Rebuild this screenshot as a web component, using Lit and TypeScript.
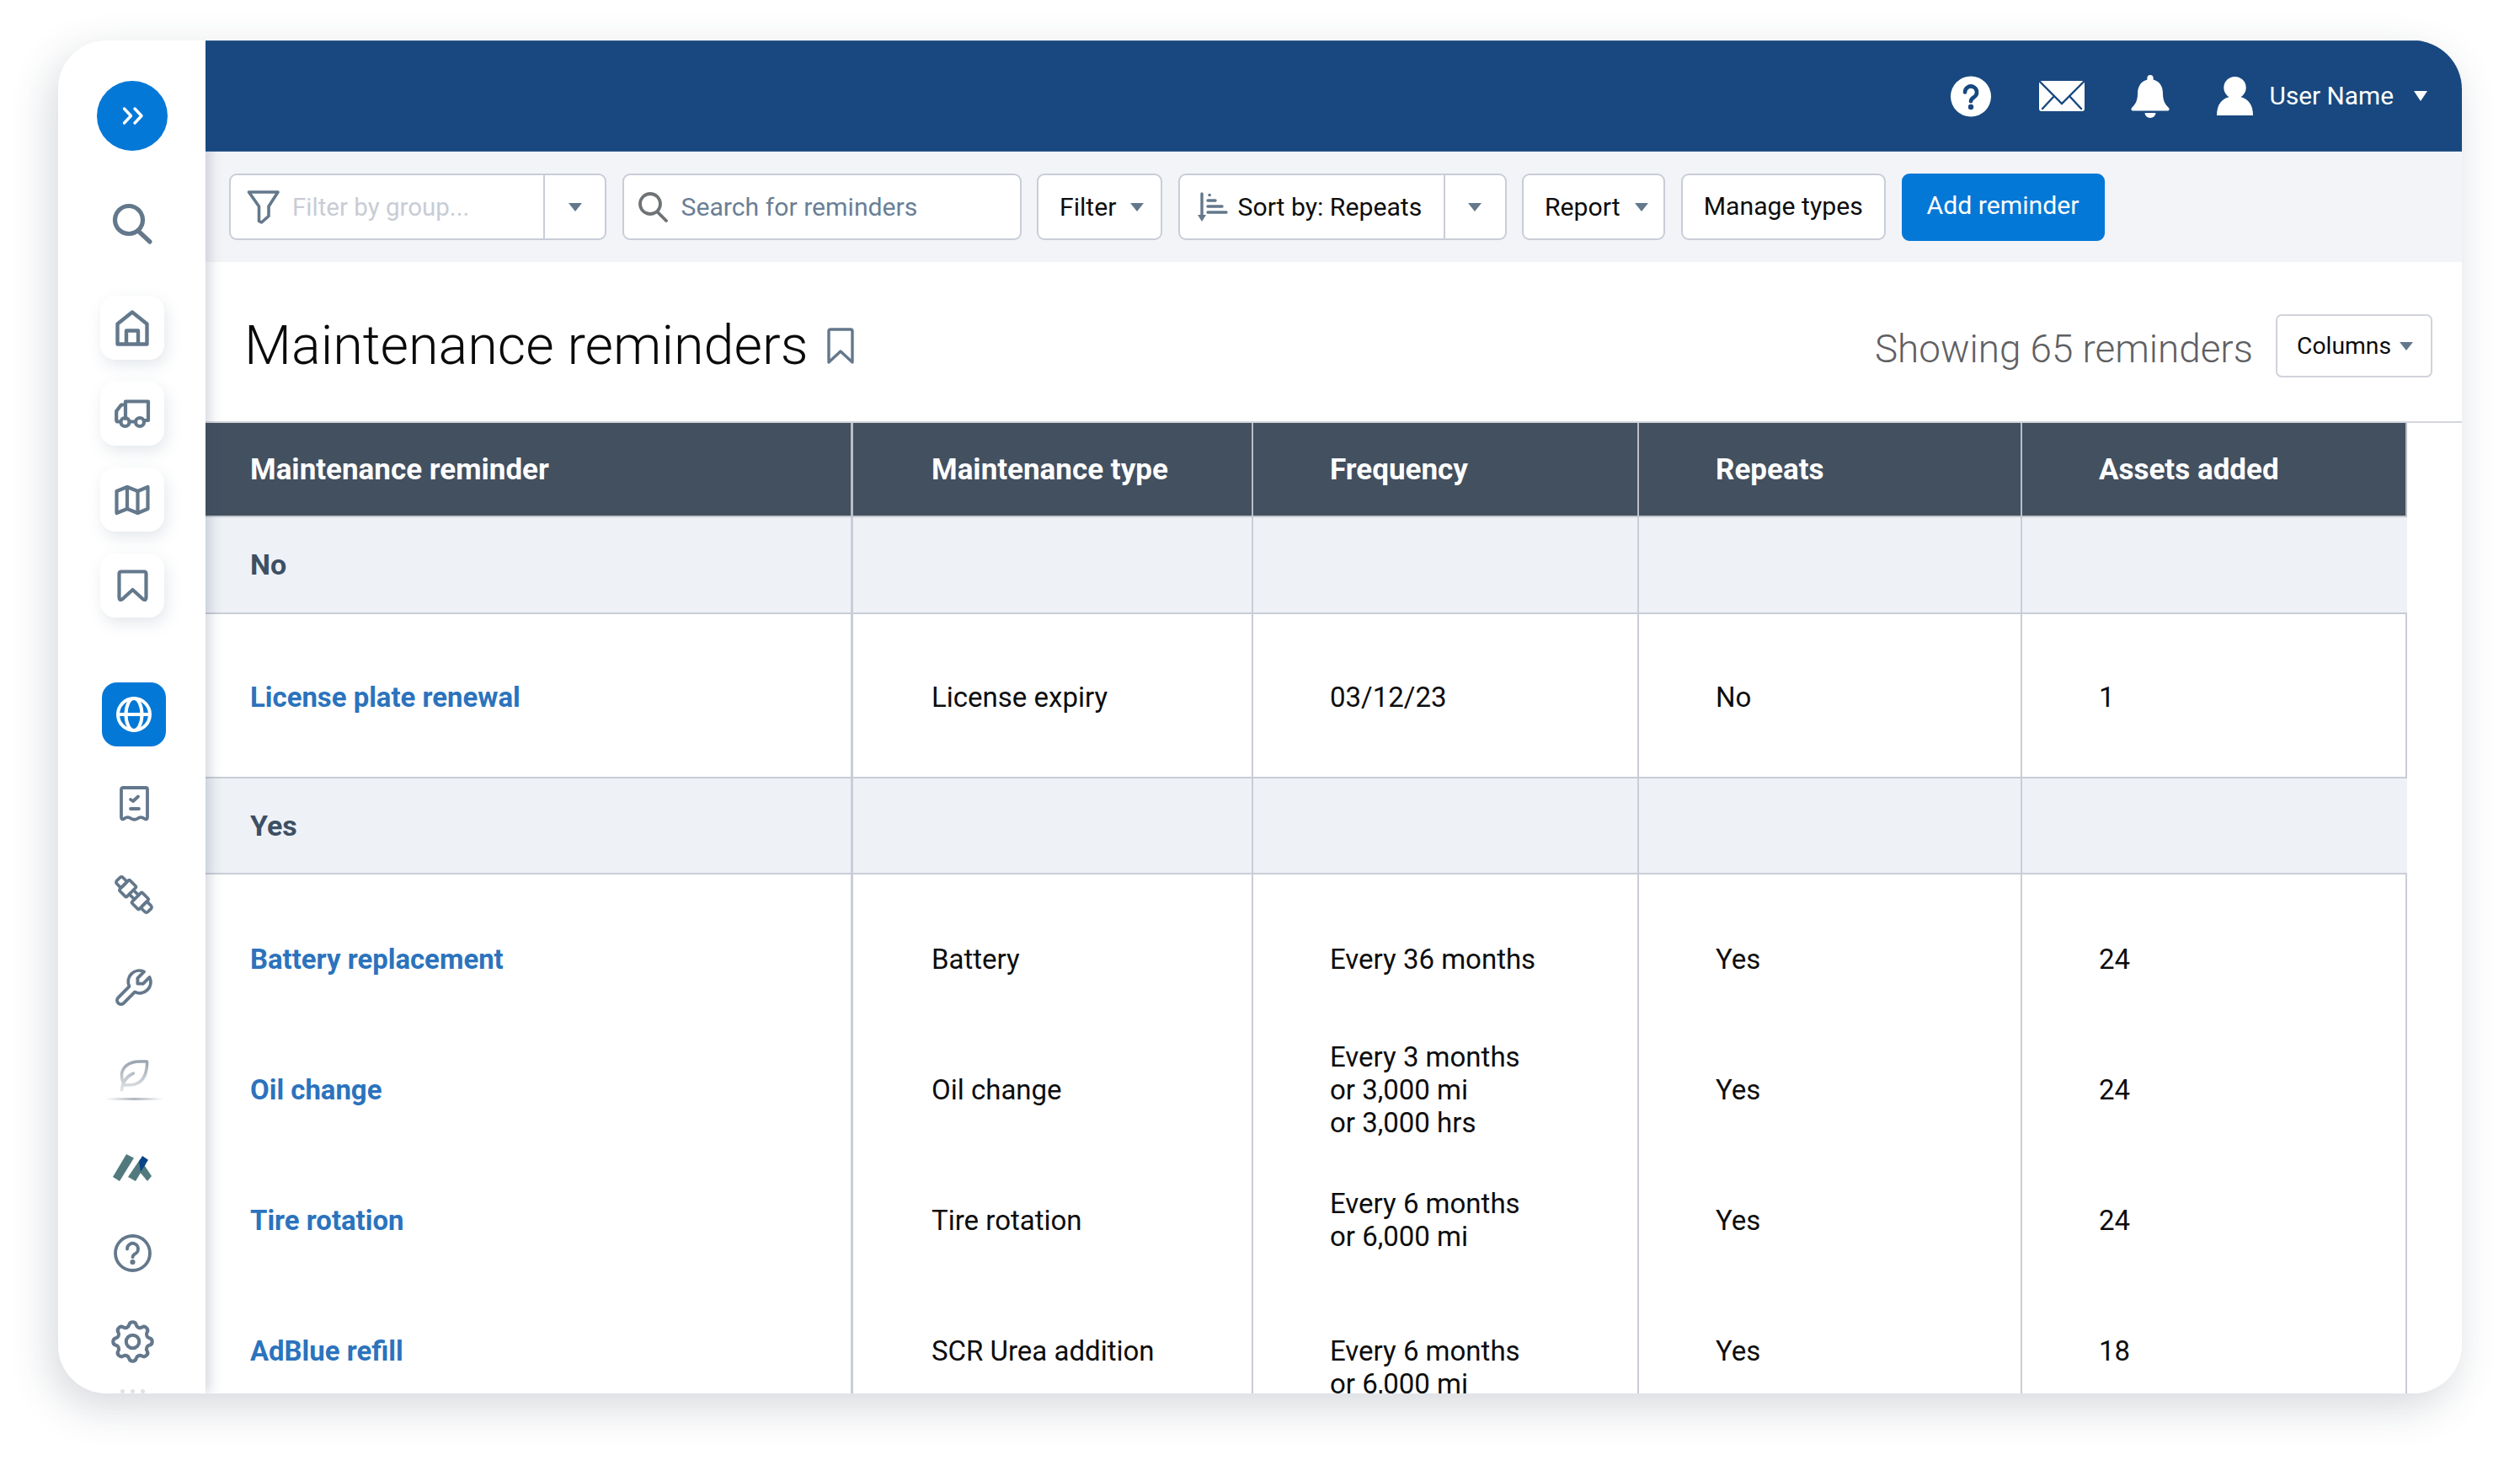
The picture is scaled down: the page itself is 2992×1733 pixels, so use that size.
import { LitElement, html, css } from "lit";
import { customElement } from "lit/decorators.js";

const caret = (cls = "") => html`<span class="caret ${cls}"></span>`;

interface Row {
  name: string;
  type: string;
  freq: string[];
  repeats: string;
  assets: string;
  cls: string;
}

const upperRows: Row[] = [
  { name: "Battery replacement", type: "Battery", freq: ["Every 36 months"], repeats: "Yes", assets: "24", cls: "first" },
  { name: "Oil change", type: "Oil change", freq: ["Every 3 months", "or 3,000 mi", "or 3,000 hrs"], repeats: "Yes", assets: "24", cls: "" },
  { name: "Tire rotation", type: "Tire rotation", freq: ["Every 6 months", "or 6,000 mi"], repeats: "Yes", assets: "24", cls: "" },
  { name: "AdBlue refill", type: "SCR Urea addition", freq: ["Every 6 months", "or 6,000 mi"], repeats: "Yes", assets: "18", cls: "last" },
];

@customElement("app-root")
export class AppRoot extends LitElement {
  static styles = css`
    :host { display: block; width: 2992px; height: 1733px; background: #fff; overflow: hidden; font-family: Roboto, "Liberation Sans", sans-serif; color: #0d0d0d; }
    .page { padding: 48px 69px 0; }
    .card { display: flex; width: 2854px; height: 1606px; border-radius: 58px; overflow: hidden; background: #fff; }
    .shadow { border-radius: 58px; box-shadow: -8px 16px 50px rgba(50, 65, 85, 0.2); width: 2854px; height: 1606px; }

    .side { position: relative; z-index: 1; flex: none; width: 175px; box-sizing: border-box; padding: 48px 0 0 1px; background: #fff; display: flex; flex-direction: column; align-items: center; box-shadow: 5px 0 14px rgba(60, 75, 95, 0.22); }
    .toggle { width: 84px; height: 84px; border-radius: 50%; background: #0478d7; display: flex; align-items: center; justify-content: center; }
    .toggle svg { margin-left: 2px; }
    .find { margin-top: 62px; }
    .tiles { margin-top: 62px; display: flex; flex-direction: column; gap: 26px; }
    .tile { width: 76px; height: 76px; border-radius: 18px; background: #fff; box-shadow: 3px 7px 18px rgba(90, 110, 135, 0.16); display: flex; align-items: center; justify-content: center; }
    .globe { margin: 77px 0 0 4px; background: #0478d7; box-shadow: none; }
    .nav { height: 48px; display: flex; align-items: center; justify-content: center; flex: none; }
    .shift { margin-left: 4px; }
    .g-receipt { margin-top: 44px; }
    .g-link { margin-top: 60px; }
    .g-wrench { margin-top: 62px; }
    .g-leaf { margin-top: 57px; height: 48px; position: relative; }
    .g-logo { margin-top: 61px; }
    .g-help { margin-top: 53px; }
    .g-gear { margin-top: 57px; }
    .rule { position: absolute; left: -17px; top: 50px; width: 69px; height: 3px; background: linear-gradient(90deg, rgba(170, 176, 184, 0), rgba(170, 176, 184, 0.9), rgba(170, 176, 184, 0)); }
    .crumbs { margin-top: 33px; display: flex; gap: 7px; }
    .crumbs i { width: 5px; height: 5px; border-radius: 50%; background: #dfe2e6; }

    .main { flex: 1; min-width: 0; display: flex; flex-direction: column; }
    .top { position: relative; z-index: 2; height: 132px; flex: none; box-sizing: border-box; background: #18487f; border-top: 1px solid #3a6090; border-bottom: 1px solid #3a6090; display: flex; align-items: center; justify-content: flex-end; padding: 0 41px 0 0; color: #fff; }
    .t-help { margin-right: 57px; }
    .t-mail { margin-right: 55px; }
    .t-bell { margin-right: 56px; }
    .t-user { margin-right: 19.5px; }
    .uname { font-size: 29.8px; margin-right: 24px; padding-bottom: 2px; }
    .caret { display: inline-block; width: 0; height: 0; border-left: 8px solid transparent; border-right: 8px solid transparent; border-top: 10px solid #64788c; flex: none; }
    .caret.white { border-top-color: #fff; border-top-width: 12px; }

    .bar { height: 131px; flex: none; box-sizing: border-box; background: #f3f4f8; padding: 26px 0 0 28px; display: flex; gap: 18.5px; align-items: flex-start; }
    .ctl { height: 79px; box-sizing: border-box; background: #fff; border: 2px solid #c9cdd7; border-radius: 9px; display: flex; align-items: center; font-size: 30.2px; color: #0d0d0d; flex: none; }
    .grp { width: 448px; padding-left: 19px; }
    .grp .ph { margin-left: 14px; flex: 1; color: #c8ccd6; font-size: 29.5px; }
    .split { align-self: stretch; flex: none; width: 71px; border-left: 2px solid #c9cdd7; display: flex; align-items: center; justify-content: center; }
    .srch { width: 474px; padding-left: 17px; }
    .srch .ph { margin-left: 16px; color: #6a7f96; }
    .b-filter { width: 149px; padding-left: 25px; justify-content: flex-start; }
    .b-filter .caret { margin-left: 17px; }
    .b-sort { width: 390px; padding-left: 21px; }
    .b-sort .lbl { margin-left: 12px; flex: 1; }
    .b-report { width: 170px; padding-left: 25px; }
    .b-report .caret { margin-left: 17px; }
    .b-manage { width: 243.5px; justify-content: center; padding-bottom: 3px; }
    .b-add { width: 241px; height: 80px; justify-content: center; background: #0478d7; border-color: #0478d7; color: #fff; padding-bottom: 5px; }

    .head { height: 191px; flex: none; box-sizing: border-box; border-bottom: 2px solid #d3d6dc; display: flex; align-items: center; padding: 10px 35px 0 46px; }
    h1 { margin: 0; font-size: 64.7px; font-weight: 300; color: #0a0a0a; line-height: 1; }
    .mark { margin-left: 23px; }
    .count { margin-left: auto; padding-top: 8px; font-size: 45.8px; font-weight: 300; color: #5f6063; }
    .cols { margin-left: 27px; width: 186px; height: 75px; box-sizing: border-box; border: 2px solid #d0d3da; border-radius: 7px; display: flex; align-items: center; padding-left: 23px; font-size: 28.3px; color: #0d0d0d; }
    .cols .caret { margin-left: 10px; }

    .tbl { width: 2614px; flex: 1; min-height: 0; }
    .row { display: grid; grid-template-columns: 769px 475px 458px 455px 457px; box-sizing: border-box; }
    .c { box-sizing: border-box; display: flex; align-items: center; border-right: 2px solid #c9cdd7; padding-left: 91px; font-size: 33px; line-height: 39px; }
    .c:first-child { padding-left: 53px; border-right-width: 3px; }
    .c:nth-child(2) { padding-left: 93px; }
    .hdr { height: 112px; background: #43505f; border-bottom: 2px solid #c3c7ce; }
    .hdr .c { color: #fff; font-weight: 700; font-size: 35px; border-right-color: #b9bec6; }
    .grouprow { background: #eef1f6; border-bottom: 2px solid #c9cdd7; }
    .grouprow .c { font-weight: 700; font-size: 34px; color: #3d4f63; }
    .grouprow .c:last-child { border-right: none; }
    .g1 { height: 115px; }
    .g2 { height: 114px; }
    .data { height: 155.3px; }
    .data.single { height: 195px; border-bottom: 2px solid #c9cdd7; }
    .data.single .c { padding-top: 3px; }
    .data.first { height: 177.5px; }
    .data.first .c { padding-top: 22.5px; }
    .data.last { height: 155.3px; }
    .c.lnk { color: #2b73bd; font-weight: 700; font-size: 32.9px; }
    .data.last .lines { height: 39px; }
    svg { display: block; flex: none; overflow: visible; }
    .ic { fill: none; stroke: #64788c; stroke-linecap: round; stroke-linejoin: round; }
  `;

  private cells(r: Row) {
    return html`<div class="row data ${r.cls}">
      <div class="c lnk">${r.name}</div>
      <div class="c">${r.type}</div>
      <div class="c"><div class="lines">${r.freq.map((f) => html`<div>${f}</div>`)}</div></div>
      <div class="c">${r.repeats}</div>
      <div class="c">${r.assets}</div>
    </div>`;
  }

  private sidebar() {
    return html`<aside class="side">
      <div class="toggle">
        <svg width="26" height="21" viewBox="0 0 26 21" fill="none" stroke="#fff" stroke-width="3.4" stroke-linecap="round" stroke-linejoin="round"><path d="M2.5 2 L10.5 10.5 L2.5 19"/><path d="M15 2 L23 10.5 L15 19"/></svg>
      </div>
      <svg class="ic find" width="48" height="48" viewBox="0 0 48 48" stroke-width="5.2"><circle cx="20" cy="20" r="16.5"/><path d="M31 33 L45 46"/></svg>
      <div class="tiles">
        <div class="tile"><svg class="ic" width="40" height="43" viewBox="0 0 40 43" stroke-width="4.4"><path d="M2.5 16.5 L20 2.5 L37.5 16.5 V40.5 H2.5 Z"/><path d="M13 40 V24.5 H27 V40"/></svg></div>
        <div class="tile"><svg class="ic" width="42" height="34" viewBox="0 0 42 34" stroke-width="4.2"><path d="M13 23 V2.5 H40 V25 H36"/><path d="M24 26.5 H19"/><path d="M6.5 26.5 H4 Q2.2 26.5 2.2 24.5 V14 L8 6.5 H13"/><circle cx="12.5" cy="27" r="5"/><circle cx="30" cy="27" r="5"/></svg></div>
        <div class="tile"><svg class="ic" width="42" height="37" viewBox="0 0 42 37" stroke-width="4.2"><path d="M2.5 8 L15 3 L27.5 8 L39.5 3 V29 L27.5 34 L15 29 L2.5 34 Z"/><path d="M15 3 V29"/><path d="M27.5 8 V34"/></svg></div>
        <div class="tile"><svg class="ic" width="37" height="39" viewBox="0 0 37 39" stroke-width="4.2"><path d="M5 2.5 H32 Q34.5 2.5 34.5 5 V33 Q34.5 37.5 30.5 35 L18.5 24 L6.5 35 Q2.5 37.5 2.5 33 V5 Q2.5 2.5 5 2.5 Z"/></svg></div>
      </div>
      <div class="tile globe"><svg width="42" height="42" viewBox="0 0 42 42" fill="none" stroke="#fff" stroke-width="4"><circle cx="21" cy="21" r="19"/><ellipse cx="21" cy="21" rx="9.5" ry="19"/><path d="M2 21 H40"/></svg></div>

      <div class="nav shift g-receipt"><svg class="ic" width="35" height="42" viewBox="0 0 35 42" stroke-width="3.8"><path d="M4 2 H31 Q33 2 33 4 V37 Q33 40.5 30 39 Q25 35.5 21.5 38.5 Q17.5 41 13.5 38.5 Q9.5 35.5 5 39 Q2 40.5 2 37 V4 Q2 2 4 2 Z"/><path d="M13 16 L16 18 L22 12.5"/><path d="M13 27 H23"/></svg></div>
      <div class="nav shift g-link"><svg class="ic" width="46" height="46" viewBox="0 0 46 46" stroke-width="4.2"><g transform="translate(23 23) rotate(45) scale(.87) translate(-23 -23)"><rect x="-7" y="17" width="11" height="12" rx="3"/><rect x="4" y="13" width="14" height="20" rx="2"/><path d="M18 19 H28 M18 27 H28"/><rect x="28" y="13" width="14" height="20" rx="2"/><rect x="42" y="17" width="11" height="12" rx="3"/></g></svg></div>
      <div class="nav shift g-wrench"><svg class="ic" width="46" height="46" viewBox="1.5 1.5 21 21" stroke-width="1.75"><g transform="matrix(-1 0 0 1 24 0)"><path d="M7 10h3v-3l-3.5 -3.5a6 6 0 0 1 8 8l6 6a2 2 0 0 1 -3 3l-6 -6a6 6 0 0 1 -8 -8l3.5 3.5"/></g></svg></div>
      <div class="nav shift g-leaf">
        <svg width="35" height="38" viewBox="4 3 17 19" fill="none" stroke="url(#leafg)" stroke-width="1.8" stroke-linecap="round" stroke-linejoin="round"><defs><linearGradient id="leafg" gradientUnits="userSpaceOnUse" x1="12" y1="3" x2="12" y2="22"><stop offset="0" stop-color="#95a1ad"/><stop offset="1" stop-color="#e6e8eb"/></linearGradient></defs><path d="M5 21c.5 -4.5 2.5 -8 7 -10"/><path d="M9 18c6.218 0 10.5 -3.288 11 -12v-2h-4.014c-7.5 0 -10.986 4 -11 8c0 2 0 4 2 6h2"/></svg>
        <span class="rule"></span>
      </div>
      <div class="nav g-logo"><svg width="46" height="33" viewBox="0 0 46 33"><polygon fill="#527a7e" points="0,27 16,0 25,4.5 8,32"/><polygon fill="#527a7e" points="18,27 33,5 39,12 27,32"/><polygon fill="#527a7e" points="36,11 46,26 41,32 31,20"/><polygon fill="#0a4488" points="31,9 35,2 42,6.7 33,21"/></svg></div>
      <div class="nav g-help"><svg class="ic" width="45" height="45" viewBox="0 0 45 45" stroke-width="3.8"><circle cx="22.5" cy="22.5" r="20.5"/><path d="M16 17.5 a6.5 6.5 0 1 1 10 5.3 c-2.4 1.4 -3.5 2.4 -3.5 4.4"/><circle cx="22.5" cy="33" r="1.2" fill="#64788c"/></svg></div>
      <div class="nav g-gear"><svg class="ic" width="49" height="49" viewBox="2.5 2.5 19 19" stroke-width="1.6"><path d="M10.325 4.317c.426 -1.756 2.924 -1.756 3.35 0a1.724 1.724 0 0 0 2.573 1.066c1.543 -.94 3.31 .826 2.37 2.37a1.724 1.724 0 0 0 1.065 2.572c1.756 .426 1.756 2.924 0 3.35a1.724 1.724 0 0 0 -1.066 2.573c.94 1.543 -.826 3.31 -2.37 2.37a1.724 1.724 0 0 0 -2.572 1.065c-.426 1.756 -2.924 1.756 -3.35 0a1.724 1.724 0 0 0 -2.573 -1.066c-1.543 .94 -3.31 -.826 -2.37 -2.37a1.724 1.724 0 0 0 -1.065 -2.572c-1.756 -.426 -1.756 -2.924 0 -3.35a1.724 1.724 0 0 0 1.066 -2.573c-.94 -1.543 .826 -3.31 2.37 -2.37c1 .608 2.296 .07 2.572 -1.065z"/><circle cx="12" cy="12" r="3"/></svg></div>
      <div class="crumbs"><i></i><i></i><i></i></div>
    </aside>`;
  }

  private topbar() {
    return html`<header class="top">
      <svg class="t-help" width="48" height="49" viewBox="0 0 48 49"><circle cx="24" cy="24.5" r="24" fill="#fff"/><path d="M17 19.5 a7 7 0 1 1 10.8 5.8 c-2.4 1.5 -3.8 2.5 -3.8 5" fill="none" stroke="#18487f" stroke-width="4.6" stroke-linecap="round"/><circle cx="24" cy="37" r="3.2" fill="#18487f"/></svg>
      <svg class="t-mail" width="54" height="36" viewBox="0 0 54 36"><rect width="54" height="36" rx="3" fill="#fff"/><path d="M1 1 L27 27 L53 1 M4 33 L18 18 M50 33 L36 18" fill="none" stroke="#18487f" stroke-width="2.4" stroke-linecap="round"/></svg>
      <svg class="t-bell" width="46" height="51" viewBox="0 0 46 51" fill="#fff"><path d="M23 0 a3.6 3.6 0 0 1 3.6 3.6 V5.5 C34 7.5 38 13.5 38 22 C38 31 41 35 45 39 Q46.5 42 44 42.5 H2 Q-.5 42 1 39 C5 35 8 31 8 22 C8 13.5 12 7.5 19.4 5.5 V3.6 A3.6 3.6 0 0 1 23 0 Z"/><path d="M16.5 45 H29.5 A6.5 6 0 0 1 16.5 45 Z"/></svg>
      <svg class="t-user" width="43" height="46" viewBox="0 0 43 46" fill="#fff"><ellipse cx="21.5" cy="13" rx="13.2" ry="13"/><path d="M0 46 C0 33 6 26 15 24 L28 24 C37 26 43 33 43 46 Z"/></svg>
      <span class="uname">User Name</span>
      ${caret("white")}
    </header>`;
  }

  private toolbar() {
    return html`<div class="bar">
      <div class="ctl grp">
        <svg class="ic" width="40" height="41" viewBox="0 0 40 41" stroke-width="3.6"><path d="M2.5 3 H37 L26 20 V31.5 L17.5 39 L14.5 37.5 V20 Z"/></svg>
        <span class="ph">Filter by group...</span>
        <span class="split">${caret()}</span>
      </div>
      <div class="ctl srch">
        <svg width="35" height="36" viewBox="0 0 35 36" fill="none" stroke="#6f7376" stroke-width="3.8" stroke-linecap="round"><circle cx="14" cy="14" r="12"/><path d="M23 24 L33 34"/></svg>
        <span class="ph">Search for reminders</span>
      </div>
      <div class="ctl b-filter"><span>Filter</span>${caret()}</div>
      <div class="ctl b-sort">
        <svg width="36" height="34" viewBox="0 0 36 34" fill="none" stroke="#64788c" stroke-width="3.4" stroke-linecap="round"><path d="M5 1 V27"/><path d="M0 26 H10 L5 34 Z" fill="#64788c" stroke="none"/><path d="M14 2.5 H14.2"/><path d="M12 9 H21"/><path d="M12 16 H29"/><path d="M12 23 H34"/></svg>
        <span class="lbl">Sort by: Repeats</span>
        <span class="split">${caret()}</span>
      </div>
      <div class="ctl b-report"><span>Report</span>${caret()}</div>
      <div class="ctl b-manage"><span>Manage types</span></div>
      <div class="ctl b-add"><span>Add reminder</span></div>
    </div>`;
  }

  render() {
    return html`<div class="page"><div class="shadow"><div class="card">
      ${this.sidebar()}
      <div class="main">
        ${this.topbar()}
        ${this.toolbar()}
        <div class="head">
          <h1>Maintenance reminders</h1>
          <svg class="ic mark" width="32" height="43" viewBox="0 0 32 43" stroke-width="3.4"><path d="M2 4 Q2 2 4 2 H28 Q30 2 30 4 V41 L16 28 L2 41 Z"/></svg>
          <span class="count">Showing 65 reminders</span>
          <div class="cols"><span>Columns</span>${caret()}</div>
        </div>
        <div class="tbl">
          <div class="row hdr">
            <div class="c">Maintenance reminder</div><div class="c">Maintenance type</div><div class="c">Frequency</div><div class="c">Repeats</div><div class="c">Assets added</div>
          </div>
          <div class="row grouprow g1"><div class="c">No</div><div class="c"></div><div class="c"></div><div class="c"></div><div class="c"></div></div>
          <div class="row data single">
            <div class="c lnk">License plate renewal</div><div class="c">License expiry</div><div class="c">03/12/23</div><div class="c">No</div><div class="c">1</div>
          </div>
          <div class="row grouprow g2"><div class="c">Yes</div><div class="c"></div><div class="c"></div><div class="c"></div><div class="c"></div></div>
          ${upperRows.map((r) => this.cells(r))}
        </div>
      </div>
    </div></div></div>`;
  }
}
